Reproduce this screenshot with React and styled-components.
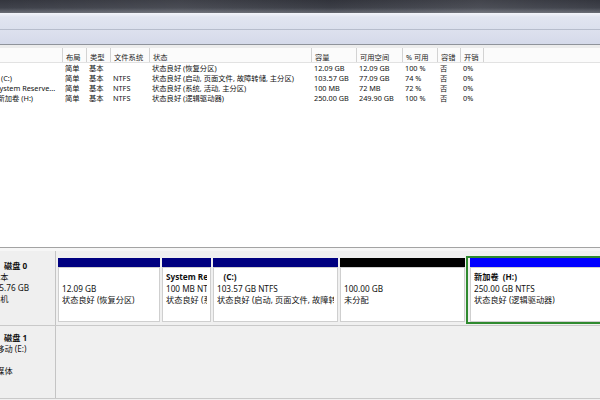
import React from "react";
import styled, { createGlobalStyle } from "styled-components";

const Global = createGlobalStyle`
  html, body { margin: 0; padding: 0; background: #f0f0f0; }
  #root { width: 600px; height: 400px; overflow: hidden; }
`;

const Page = styled.div`
  width: 600px;
  height: 400px;
  display: flex;
  flex-direction: column;
  overflow: hidden;
  background: #f0f0f0;
  font-family: "Noto Sans", "Noto Sans CJK SC", sans-serif;
  color: #111;
`;

const TitleBar = styled.div`
  height: 13px;
  flex: none;
  background:
    linear-gradient(90deg, rgba(255,255,255,0) 0%, rgba(255,255,255,0.06) 30%, rgba(0,0,0,0.05) 55%, rgba(255,255,255,0.07) 80%, rgba(0,0,0,0) 100%),
    linear-gradient(180deg, #34363e 0%, #3f424b 60%, #6b6e76 100%);
`;

const MenuBar = styled.div`
  height: 16px;
  flex: none;
  background: linear-gradient(180deg, #f3f5fa 0%, #e1e5f0 25%, #dbe0ed 100%);
  border-bottom: 1px solid #b7bdcc;
`;

const ToolBar = styled.div`
  height: 14px;
  flex: none;
  background: linear-gradient(180deg, #dde1ee 0%, #d5daea 100%);
  border-bottom: 1px solid #8f939b;
`;

const Gap = styled.div`
  height: 3px;
  flex: none;
  background: #ececec;
`;

const TableArea = styled.div`
  height: 199px;
  flex: none;
  background: #ffffff;
  overflow: hidden;
  font-size: 7.3px;
`;

const cols = "62px 24px 24px 39px 162px 45px 46px 35px 23px 23px 1fr";

const HeaderRow = styled.div`
  display: grid;
  grid-template-columns: ${cols};
  height: 14px;
  background: #fbfbfb;
  border-bottom: 1px solid #e2e2e2;
`;

const HeadCell = styled.div`
  border-left: ${(p) => (p.$first ? "none" : "1px solid #d3d3d3")};
  padding: 4px 0 0 3px;
  line-height: 10px;
  white-space: nowrap;
  overflow: hidden;
  color: #222;
`;

const Row = styled.div`
  display: grid;
  grid-template-columns: ${cols};
  height: 10px;
  line-height: 10px;
`;

const Cell = styled.div`
  padding-left: 3px;
  white-space: nowrap;
  overflow: hidden;
`;

const NameCell = styled.div`
  white-space: nowrap;
  overflow: hidden;
`;

const NameText = styled.span`
  display: inline-block;
  margin-left: ${(p) => p.$shift}px;
`;

const Splitter = styled.div`
  height: 3px;
  flex: none;
  border-top: 1px solid #a3a3a3;
  background: #f6f6f6;
`;

const DiskRow = styled.div`
  display: flex;
  height: ${(p) => p.$h}px;
  flex: none;
  border-bottom: 1px solid #c9c9c9;
  background: #f0f0f0;
  font-size: 8.2px;
  overflow: hidden;
`;

const DiskLabel = styled.div`
  width: 56px;
  flex: none;
  border-right: 1px solid #c4c4c4;
  padding-top: ${(p) => p.$top}px;
  box-sizing: border-box;
  overflow: hidden;
  line-height: 11.3px;
  background: #efefef;
`;

const LabelLine = styled.div`
  white-space: nowrap;
  overflow: hidden;
  height: 11.3px;
  text-indent: ${(p) => p.$indent || 0}px;
`;

const LabelTitle = styled.div`
  font-weight: 700;
  padding-left: 4px;
  white-space: nowrap;
  height: 11.3px;
`;

const Partitions = styled.div`
  flex: 1;
  display: flex;
  padding: 5px 0 0 1px;
  min-width: 0;
`;

const PartWrap = styled.div`
  flex: none;
  width: ${(p) => p.$w}px;
  display: flex;
  flex-direction: column;
  box-sizing: border-box;
  height: 68px;
  border: 2px solid ${(p) => (p.$selected ? "#2f8a2f" : "transparent")};
  border-left-width: ${(p) => (p.$selected ? 2 : 0)}px;
  border-right-width: ${(p) => (p.$selected ? 2 : 0)}px;
  padding: ${(p) => (p.$selected ? "0 0 0 2px" : "0 1px")};
`;

const Bar = styled.div`
  height: 9px;
  flex: none;
  background: ${(p) => p.$color};
`;

const PartBody = styled.div`
  flex: 1;
  min-width: 0;
  background: #ffffff;
  border: 1px solid #cfcfcf;
  padding: 3px 3px 0 3px;
  line-height: 11.5px;
  overflow: hidden;
`;

const PartLine = styled.div`
  height: 11.5px;
  font-weight: ${(p) => (p.$bold ? 700 : 400)};
  white-space: pre;
  overflow: hidden;
`;

const EmptyArea = styled.div`
  flex: 1;
  background: #f0f0f0;
`;

const header = ["", "布局", "类型", "文件系统", "状态", "容量", "可用空间", "% 可用", "容错", "开销", ""];

const rows = [
  { name: "", shift: 0, c: ["简单", "基本", "", "状态良好 (恢复分区)", "12.09 GB", "12.09 GB", "100 %", "否", "0%"] },
  { name: "(C:)", shift: 1, c: ["简单", "基本", "NTFS", "状态良好 (启动, 页面文件, 故障转储, 主分区)", "103.57 GB", "77.09 GB", "74 %", "否", "0%"] },
  { name: "System Reserve...", shift: -4.5, c: ["简单", "基本", "NTFS", "状态良好 (系统, 活动, 主分区)", "100 MB", "72 MB", "72 %", "否", "0%"] },
  { name: "新加卷 (H:)", shift: -2.5, c: ["简单", "基本", "NTFS", "状态良好 (逻辑驱动器)", "250.00 GB", "249.90 GB", "100 %", "否", "0%"] },
];

const parts = [
  { w: 104, color: "#000080", lines: ["", "12.09 GB", "状态良好 (恢复分区)"] },
  { w: 51, color: "#000080", lines: ["System Reserved", "100 MB NTFS", "状态良好 (系统, 活动, 主分区)"] },
  { w: 127, color: "#000080", lines: ["   (C:)", "103.57 GB NTFS", "状态良好 (启动, 页面文件, 故障转储, 主分区)"] },
  { w: 127, color: "#000000", lines: ["", "100.00 GB", "未分配"] },
  { w: 160, color: "#0000ff", selected: true, lines: ["新加卷  (H:)", "250.00 GB NTFS", "状态良好 (逻辑驱动器)"] },
];

export default function App() {
  return (
    <Page>
      <Global />
      <TitleBar />
      <MenuBar />
      <ToolBar />
      <Gap />
      <TableArea>
        <HeaderRow>
          {header.map((h, i) => (
            <HeadCell key={i} $first={i === 0}>{h}</HeadCell>
          ))}
        </HeaderRow>
        {rows.map((r, i) => (
          <Row key={i}>
            <NameCell>
              <NameText $shift={r.shift}>{r.name}</NameText>
            </NameCell>
            {r.c.map((v, j) => (
              <Cell key={j}>{v}</Cell>
            ))}
            <Cell />
          </Row>
        ))}
      </TableArea>
      <Splitter />
      <DiskRow $h={74}>
        <DiskLabel $top={8.5}>
          <LabelTitle>磁盘 0</LabelTitle>
          <LabelLine $indent={-8}>基本</LabelLine>
          <LabelLine $indent={-10}>465.76 GB</LabelLine>
          <LabelLine $indent={-8}>联机</LabelLine>
        </DiskLabel>
        <Partitions>
          {parts.map((p, i) => (
            <PartWrap key={i} $w={p.w} $selected={p.selected}>
              <Bar $color={p.color} />
              <PartBody>
                {p.lines.map((l, j) => (
                  <PartLine key={j} $bold={j === 0}>{l}</PartLine>
                ))}
              </PartBody>
            </PartWrap>
          ))}
        </Partitions>
      </DiskRow>
      <DiskRow $h={72}>
        <DiskLabel $top={5.5}>
          <LabelTitle>磁盘 1</LabelTitle>
          <LabelLine $indent={-12}>可移动 (E:)</LabelLine>
          <LabelLine />
          <LabelLine $indent={-12}>无媒体</LabelLine>
        </DiskLabel>
        <EmptyArea />
      </DiskRow>
    </Page>
  );
}
